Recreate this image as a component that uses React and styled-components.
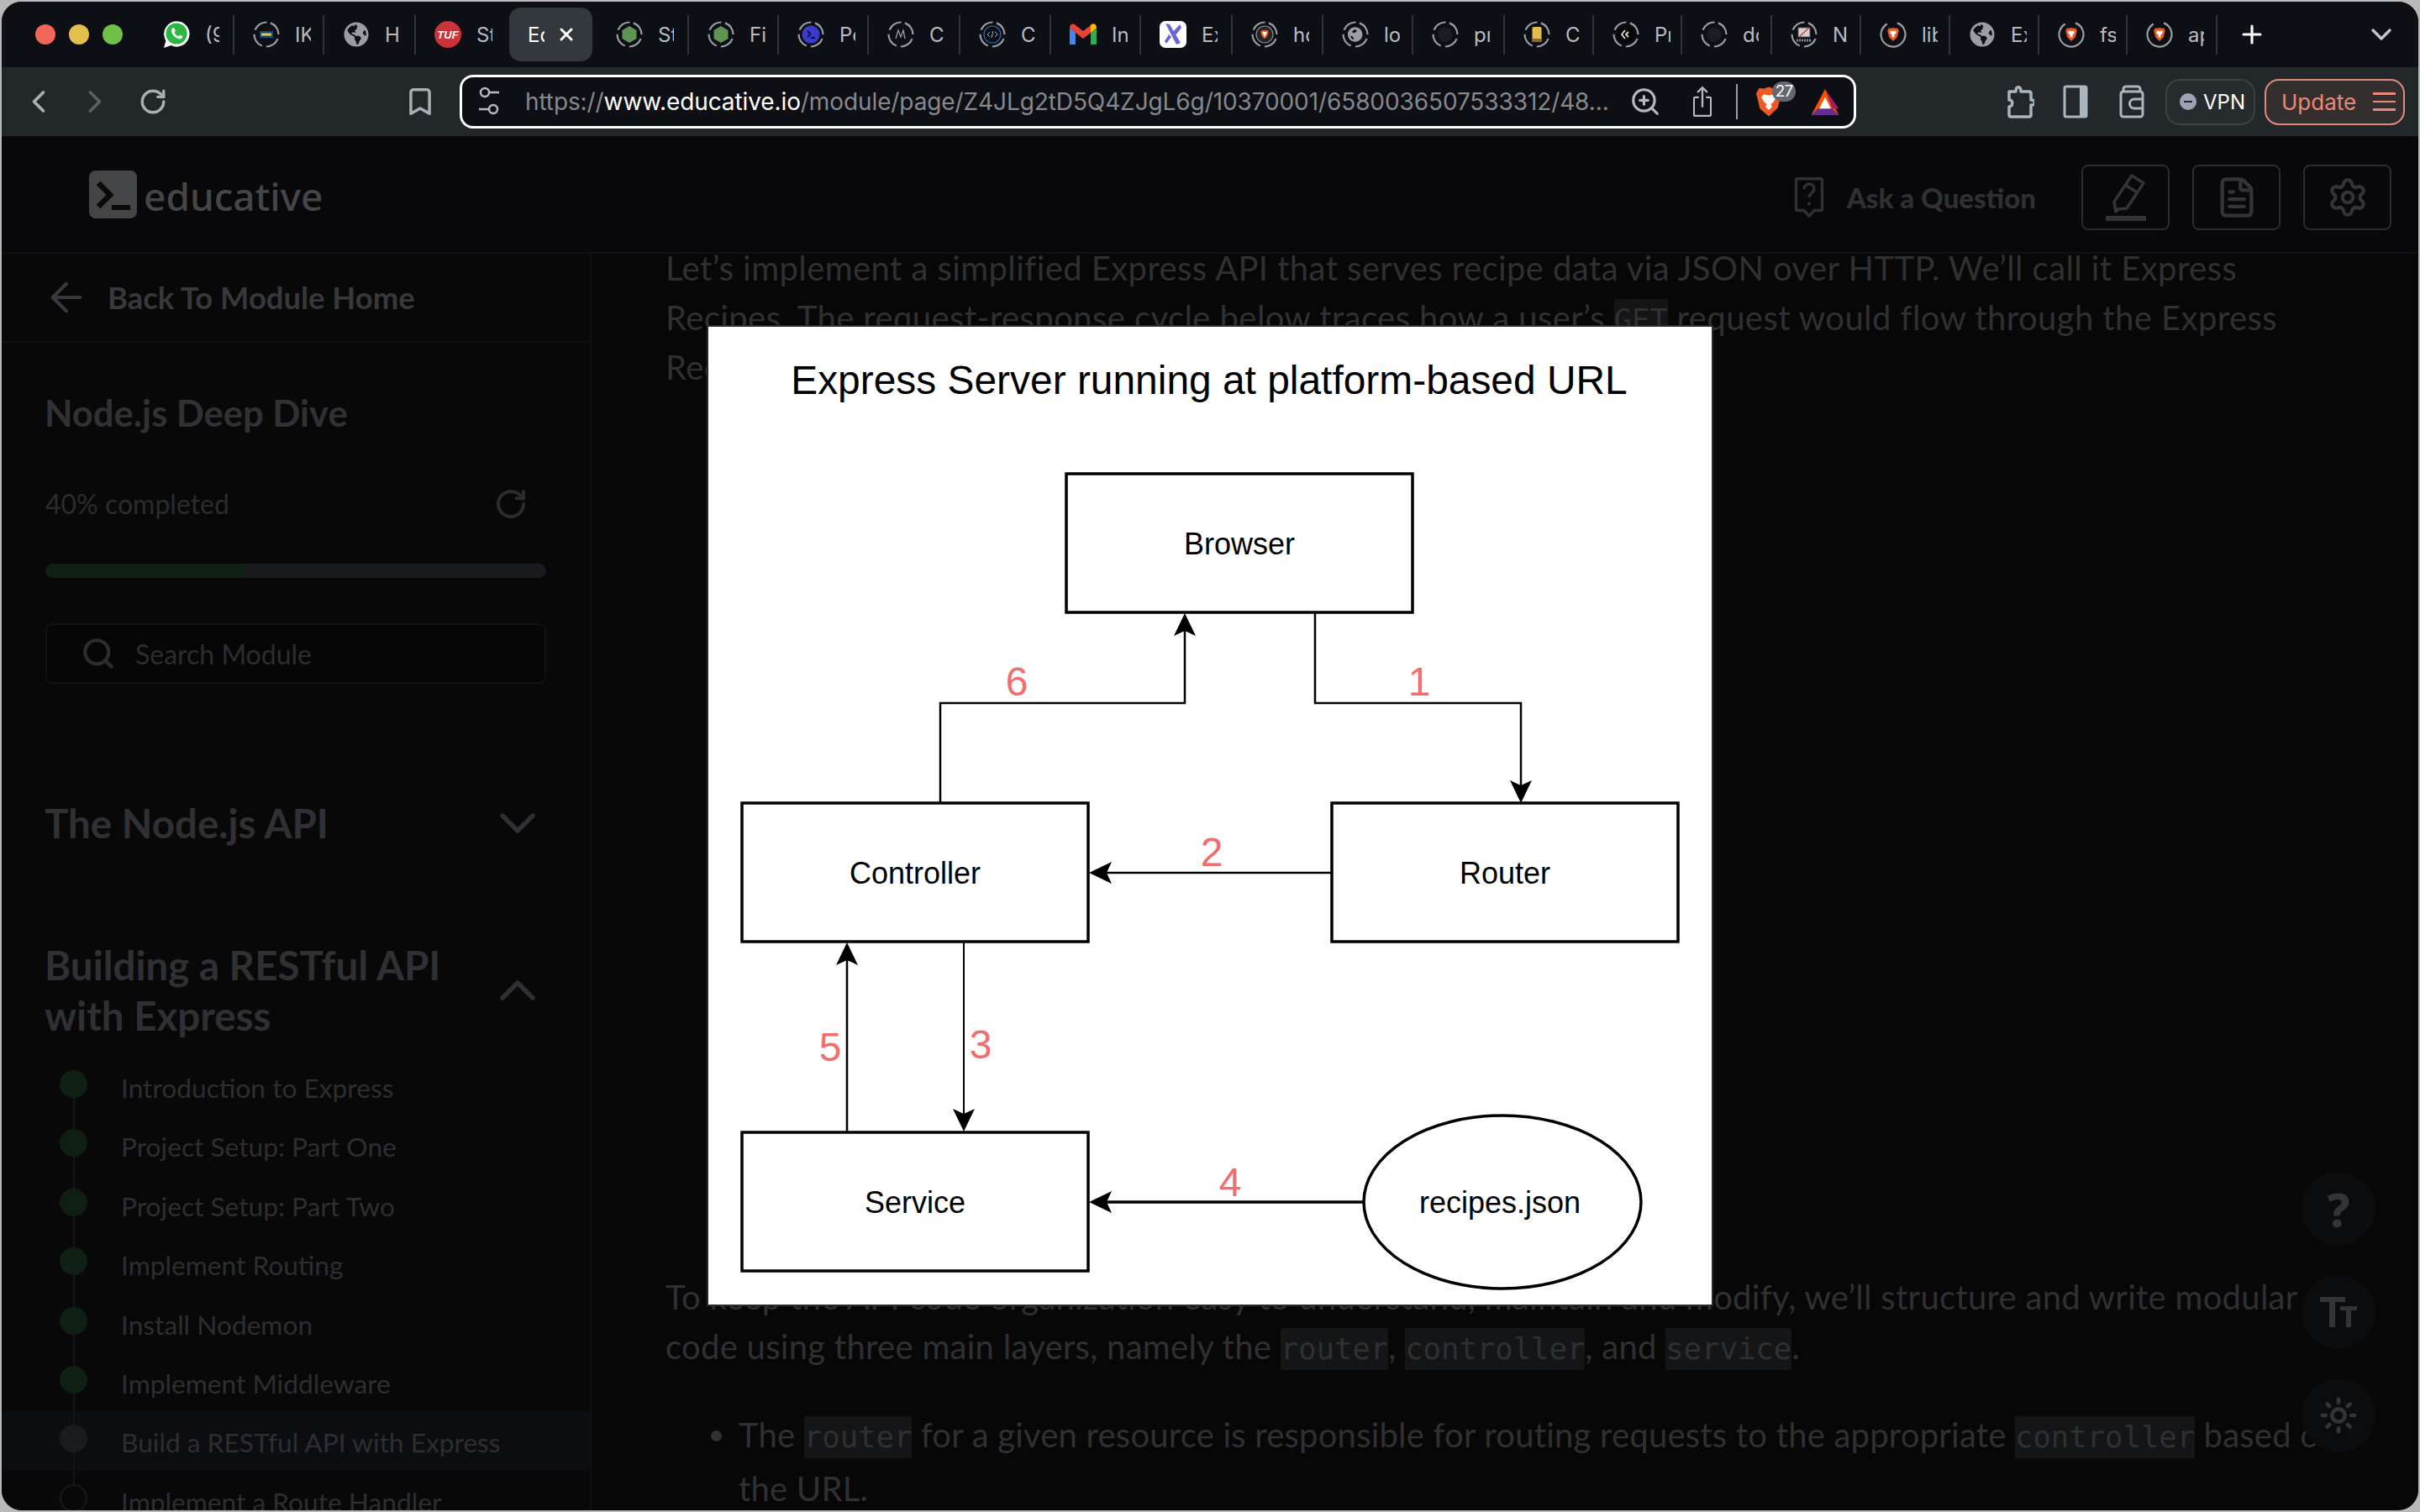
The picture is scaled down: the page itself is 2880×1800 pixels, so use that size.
import React from "react";
import styled, { createGlobalStyle } from "styled-components";
import {
  ArrowLeft,
  Bookmark,
  ChevronDown,
  ChevronLeft,
  ChevronRight,
  ChevronUp,
  FileText,
  Plus,
  RotateCw,
  Search,
  Settings,
  Sun,
  X,
  ZoomIn,
} from "lucide-react";
import { FaGlobeAmericas } from "react-icons/fa";

const GlobalStyle = createGlobalStyle`
  html, body {
    margin: 0;
    padding: 0;
    background: #b9b9b9;
  }
  body {
    width: 2880px;
    height: 1800px;
    overflow: hidden;
    font-family: "Lato", "Noto Sans", sans-serif;
  }
`;

const Window = styled.div`
  position: relative;
  margin: 2px;
  width: 2876px;
  height: 1796px;
  border-radius: 24px;
  overflow: hidden;
  display: flex;
  flex-direction: column;
  background: #070708;
`;

/* ---------- browser chrome ---------- */

const TabBar = styled.div`
  height: 78px;
  flex: none;
  background: #0e0f14;
  display: flex;
  align-items: center;
  padding-left: 32px;
`;

const Lights = styled.div`
  width: 138px;
  flex: none;
  display: flex;
  gap: 16px;
  padding-left: 8px;
  box-sizing: border-box;
`;

const Light = styled.span`
  width: 24px;
  height: 24px;
  border-radius: 50%;
  background: ${(p) => p.$color};
`;

const Tab = styled.div`
  flex: none;
  box-sizing: border-box;
  width: ${(p) => p.$w}px;
  height: 47px;
  padding-left: 22px;
  display: flex;
  align-items: center;
  gap: 18px;
  border-right: 2px solid ${(p) => (p.$plain ? "transparent" : "#303338")};
`;

const ActiveTabWrap = styled.div`
  flex: none;
  width: ${(p) => p.$w}px;
  padding-left: 4px;
  box-sizing: border-box;
`;

const ActiveTab = styled.div`
  width: 99px;
  height: 64px;
  border-radius: 14px;
  background: #32383b;
  display: flex;
  align-items: center;
  padding-left: 22px;
  box-sizing: border-box;
  color: #fff;
  gap: 14px;
`;

const TabLabel = styled.span`
  width: ${(p) => p.$width || 19}px;
  overflow: hidden;
  white-space: nowrap;
  font: 24px "Inter", "Liberation Sans", sans-serif;
  color: ${(p) => (p.$active ? "#fff" : "#b9bbbf")};
`;

const NewTab = styled.div`
  flex: none;
  width: 82px;
  display: flex;
  justify-content: center;
  color: #fff;
`;

const TabMenu = styled.div`
  flex: none;
  margin-left: 93px;
  color: #c4c6c9;
  display: flex;
`;

const Toolbar = styled.div`
  height: 82px;
  flex: none;
  background: #22272a;
  display: flex;
  align-items: center;
  padding-left: 20px;
`;

const ToolIcon = styled.div`
  flex: none;
  width: 48px;
  height: 48px;
  margin-left: ${(p) => p.$ml || 0}px;
  display: flex;
  align-items: center;
  justify-content: center;
  color: ${(p) => p.$color || "#a9b0b5"};
`;

const AddressBar = styled.div`
  flex: none;
  box-sizing: border-box;
  width: 1662px;
  height: 64px;
  margin-left: 23px;
  border: 3px solid #fff;
  border-radius: 16px;
  background: #0e0f14;
  display: flex;
  align-items: center;
  padding-left: 20px;
`;

const Url = styled.div`
  width: 1291px;
  margin-left: 31px;
  flex: none;
  white-space: nowrap;
  overflow: hidden;
  font: 28px "Inter", "Liberation Sans", sans-serif;
  letter-spacing: -0.1px;
  color: #85888c;
  b {
    font-weight: 400;
    color: #fff;
  }
`;

const UrlIcon = styled.div`
  flex: none;
  width: 40px;
  height: 48px;
  margin-left: ${(p) => p.$ml || 0}px;
  display: flex;
  align-items: center;
  justify-content: center;
  color: #b6babd;
`;

const UrlDivider = styled.div`
  flex: none;
  width: 2px;
  height: 42px;
  margin-left: 20px;
  background: #9a9ea2;
`;

const ShieldWrap = styled.div`
  position: relative;
  flex: none;
  width: 40px;
  height: 48px;
  margin-left: 17px;
  display: flex;
  align-items: center;
  justify-content: center;
`;

const ShieldBadge = styled.span`
  position: absolute;
  top: 0;
  left: 24px;
  width: 28px;
  height: 24px;
  border-radius: 12px;
  background: #65676f;
  color: #fff;
  font: 19px "Inter", "Liberation Sans", sans-serif;
  letter-spacing: -1px;
  text-align: center;
  line-height: 24px;
`;

const Pill = styled.div`
  flex: none;
  box-sizing: border-box;
  height: 55px;
  border-radius: 17px;
  display: flex;
  align-items: center;
  font-family: "Inter", "Liberation Sans", sans-serif;
`;

const VpnPill = styled(Pill)`
  width: 107px;
  margin-left: 16px;
  padding-left: 15px;
  gap: 8px;
  border: 2px solid #3b4145;
  background: #262b2e;
  color: #fff;
  font-size: 24px;
`;

const VpnDot = styled.span`
  width: 20px;
  height: 20px;
  border-radius: 50%;
  background: #9ea2b2;
  display: flex;
  align-items: center;
  justify-content: center;
  &::before {
    content: "";
    width: 10px;
    height: 2px;
    background: #22272a;
  }
`;

const UpdatePill = styled(Pill)`
  width: 167px;
  margin-left: 11px;
  padding-left: 18px;
  gap: 20px;
  border: 2px solid #e08a7e;
  background: #342f2f;
  color: #e8897c;
  font-size: 26px;
`;

const MenuBars = styled.span`
  width: 27px;
  display: flex;
  flex-direction: column;
  gap: 7px;
  i {
    display: block;
    height: 2.5px;
    background: #e8897c;
  }
`;

/* ---------- site header ---------- */

const SiteHeader = styled.div`
  height: 140px;
  flex: none;
  box-sizing: border-box;
  border-bottom: 2px solid #0f1012;
  display: flex;
  align-items: center;
  padding: 0 32px 0 104px;
  background: #08080a;
`;

const Logo = styled.div`
  display: flex;
  align-items: center;
  gap: 8px;
  font: 500 46px "Noto Sans", sans-serif;
  color: #444547;
  span {
    margin-top: 3px;
  }
`;

const AskQuestion = styled.div`
  margin: 8px 0 0 auto;
  display: flex;
  align-items: center;
  gap: 26px;
  font: 900 33px "Lato", sans-serif;
  color: #2f3033;
`;

const HeaderButton = styled.div`
  width: 105px;
  height: 78px;
  box-sizing: border-box;
  margin: 8px 0 0 ${(p) => p.$ml || 27}px;
  border: 2px solid #2a2b2d;
  border-radius: 8px;
  display: flex;
  align-items: center;
  justify-content: center;
  color: #333436;
`;

/* ---------- sidebar ---------- */

const Body = styled.div`
  flex: 1;
  min-height: 0;
  display: flex;
`;

const Sidebar = styled.div`
  flex: none;
  width: 702px;
  box-sizing: border-box;
  border-right: 2px solid #0f1012;
  background: #080809;
  overflow: hidden;
`;

const BackRow = styled.div`
  height: 106px;
  box-sizing: border-box;
  border-bottom: 2px solid #0f1012;
  padding-left: 49px;
  display: flex;
  align-items: center;
  gap: 21px;
  font: 700 36.4px "Lato", sans-serif;
  color: #37383b;
`;

const SideSection = styled.div`
  padding: 0 52px;
`;

const CourseTitle = styled.div`
  margin-top: 53px;
  margin-left: -1px;
  font: 700 43.5px/60px "Lato", sans-serif;
  color: #303134;
`;

const ProgressRow = styled.div`
  margin-top: 59px;
  display: flex;
  justify-content: space-between;
  align-items: center;
  padding-right: 22px;
  font: 32px/40px "Lato", sans-serif;
  color: #2b2c2e;
`;

const ProgressTrack = styled.div`
  margin-top: 51px;
  height: 17px;
  border-radius: 9px;
  background: #191a1d;
  overflow: hidden;
`;

const ProgressFill = styled.div`
  height: 100%;
  background: #101f13;
`;

const SearchBox = styled.div`
  margin-top: 54px;
  height: 72px;
  box-sizing: border-box;
  border: 2px solid #101113;
  border-radius: 8px;
  background: #060607;
  padding-left: 40px;
  display: flex;
  align-items: center;
  gap: 23px;
  font: 32px "Lato", sans-serif;
  color: #2c2d2f;
`;

const Chapter = styled.div`
  margin-top: ${(p) => p.$mt}px;
  margin-left: -1px;
  display: flex;
  justify-content: space-between;
  align-items: center;
  font: 700 47.500px/60px "Lato", sans-serif;
  color: #2f3033;
  svg {
    flex: none;
    margin: -6px -2px -6px 0;
  }
`;

const Lessons = styled.div`
  margin-top: 19px;
`;

const Lesson = styled.div`
  height: 70.4px;
  padding-left: 69px;
  display: flex;
  gap: 40px;
  background: ${(p) => (p.$current ? "#0c0d10" : "transparent")};
`;

const Marker = styled.div`
  width: 33px;
  flex: none;
  display: flex;
  flex-direction: column;
  align-items: center;
`;

const Segment = styled.span`
  width: 2px;
  flex: ${(p) => (p.$grow ? 1 : "none")};
  height: ${(p) => (p.$grow ? "auto" : "16px")};
  background: ${(p) => (p.$hidden ? "transparent" : "#141517")};
`;

const Dot = styled.span`
  flex: none;
  width: 33px;
  height: 33px;
  box-sizing: border-box;
  border-radius: 50%;
  background: ${(p) => (p.$state === "done" ? "#101f13" : p.$state === "now" ? "#1a1b1d" : "transparent")};
  border: ${(p) => (p.$state === "todo" ? "2px solid #17181b" : "none")};
`;

const LessonName = styled.div`
  font: 31.7px/70.4px "Lato", sans-serif;
  padding-top: 2px;
  white-space: nowrap;
  color: #2d2e30;
`;

/* ---------- article ---------- */

const Main = styled.div`
  flex: 1;
  min-width: 0;
  overflow: hidden;
  padding-left: 88px;
`;

const Article = styled.div`
  margin-top: -12px;
  font: 40px/59px "Lato", sans-serif;
  color: #2f3032;
  white-space: nowrap;
`;

const Paragraph = styled.p`
  margin: 0;
  letter-spacing: ${(p) => p.$spacing}px;
`;

const FigureSlot = styled.div`
  height: 1048px;
`;

const Code = styled.code`
  display: inline-block;
  height: 50px;
  vertical-align: baseline;
  font: 35.6px/50px "DejaVu Sans Mono", monospace;
  letter-spacing: 0;
  background: #141517;
  color: #2f3032;
`;

const List = styled.ul`
  margin: 43px 0 0;
  padding-left: 87px;
  line-height: 64px;
  letter-spacing: 0.21px;
  li::marker {
    color: #2f3032;
  }
`;

/* ---------- floating ---------- */

const FloatDock = styled.div`
  position: absolute;
  right: 51px;
  top: 1393px;
  display: flex;
  flex-direction: column;
  gap: 35px;
`;

const FloatButton = styled.div`
  width: 88px;
  height: 88px;
  border-radius: 50%;
  background: #0b0c0e;
  display: flex;
  align-items: center;
  justify-content: center;
  color: #333437;
  font: 800 56px "Noto Sans", sans-serif;
`;

const Modal = styled.div`
  position: absolute;
  left: 839px;
  top: 385px;
  width: 1198px;
  height: 1168px;
  box-sizing: border-box;
  border: 2px solid #2b2b2b;
  background: #fff;
`;

const DiagramSvg = styled.svg`
  display: block;
  width: 1194px;
  height: 1164px;
  font-family: "Liberation Sans", Arial, sans-serif;
`;

/* ---------- small drawings ---------- */

const Ring = ({ children, solid }) => (
  <svg width="32" height="32" viewBox="0 0 32 32" style={{ flex: "none" }}>
    <circle
      cx="16"
      cy="16"
      r="14.5"
      fill="none"
      stroke="#9a9da1"
      strokeWidth="2.2"
      strokeDasharray={solid ? "78 13" : "17.5 5.3"}
      transform="rotate(-70 16 16)"
    />
    {children}
  </svg>
);

const BraveShield = ({ size = 16, x = 8, y = 8 }) => (
  <svg x={x} y={y} width={size} height={size} viewBox="0 0 24 28">
    <path d="M12 0l5 1.5 4-.5 3 5-1 4-3 10-8 8-8-8L1 10 0 6l3-5 4 .5z" fill="#ee5a24" />
    <path d="M12 7l5-1 2 3-3 5-2 1 1 3-3 3-3-3 1-3-2-1-3-5 2-3z" fill="#fff" />
  </svg>
);

const Favicon = ({ kind }) => {
  switch (kind) {
    case "whatsapp":
      return (
        <svg width="32" height="34" viewBox="0 0 32 34" style={{ flex: "none" }}>
          <path d="M1 33l2.4-8.6A15.2 15.2 0 1 1 9.5 30z" fill="#fff" />
          <circle cx="16" cy="16" r="12.6" fill="#2bb741" />
          <path
            d="M11.5 9.5c-1.6 1-2 3-1 5.500 1.300 3 4 5.800 7 7 2.500 1 4.500.4 5.300-1.300.4-.9.4-1.500.2-1.700l-3-1.500-1.600 1.800c-2.400-.9-4-2.500-5-5l1.500-1.600-1.300-3c-.5-.7-1.500-.8-2.100-.2z"
            fill="#fff"
          />
        </svg>
      );
    case "ikea":
      return (
        <Ring>
          <rect x="8" y="12" width="16" height="8" fill="#0a4a92" />
          <rect x="10" y="14.500" width="12" height="3" fill="#f3c623" />
        </Ring>
      );
    case "globe":
      return <FaGlobeAmericas size={30} color="#9a9ea3" style={{ flex: "none", margin: "0 1px" }} />;
    case "tuf":
      return (
        <svg width="32" height="32" viewBox="0 0 32 32" style={{ flex: "none" }}>
          <circle cx="16" cy="16" r="16" fill="#c8343a" />
          <text x="16" y="20.500" textAnchor="middle" fontSize="13" fontWeight="800" fontStyle="italic" fill="#fff" fontFamily="Liberation Sans">
            TUF
          </text>
        </svg>
      );
    case "node":
      return (
        <Ring>
          <path d="M16 6l8.500 5v10L16 26l-8.500-5V11z" fill="#5f9455" />
        </Ring>
      );
    case "prompt":
      return (
        <Ring>
          <circle cx="16" cy="16" r="10.500" fill="#3a3ccf" />
          <path d="M12 12l3.500 3.500L12 19M16 20h5" stroke="#101030" strokeWidth="1.800" fill="none" />
        </Ring>
      );
    case "medium":
      return (
        <Ring>
          <path d="M10 21l3-10 3 8 3-8 2 10" stroke="#9a9da1" strokeWidth="1.300" fill="none" />
        </Ring>
      );
    case "code":
      return (
        <Ring>
          <circle cx="16" cy="16" r="10" fill="#0a0c14" stroke="#2e6fb5" strokeWidth="1.200" />
          <path d="M13 13l-3 3 3 3M19 13l3 3-3 3M17 12l-2 8" stroke="#9fb4c9" strokeWidth="1" fill="none" />
        </Ring>
      );
    case "gmail":
      return (
        <svg width="32" height="32" viewBox="0 0 32 32" style={{ flex: "none" }}>
          <path d="M0 8v20h7V14z" fill="#4285f4" />
          <path d="M25 14v14h7V8z" fill="#34a853" />
          <path d="M0 8c0-4 4-6 7-3l9 7 9-7c3-3 7-1 7 3l-7 6-9 7-9-7z" fill="#ea4335" />
          <path d="M25 5c3-3 7-1 7 3l-7 6z" fill="#fbbc04" />
        </svg>
      );
    case "excal":
      return (
        <svg width="32" height="32" viewBox="0 0 32 32" style={{ flex: "none" }}>
          <rect width="32" height="32" rx="7" fill="#fff" />
          <path d="M7 3l5 1 13 22-5 2zM24 4l2 4-7 9-4-3zM6 24l5-8 3 3-6 8z" fill="#6965db" />
        </svg>
      );
    case "brave-ring":
      return (
        <Ring>
          <circle cx="16" cy="16" r="10" fill="#24262a" stroke="#8d8f93" strokeWidth="1.200" />
          <BraveShield size={11} x={10.500} y={10.500} />
        </Ring>
      );
    case "globe-ring":
      return (
        <Ring>
          <svg x="7" y="7" width="18" height="18" viewBox="0 0 512 512">
            <path d="M248 8C111 8 0 119 0 256s111 248 248 248 248-111 248-248S385 8 248 8zm0 80l60 30-40 70-90 20-40-60zM90 300l80 30 40 80-30 20c-50-20-80-70-90-130z" fill="#9a9ea3" />
          </svg>
        </Ring>
      );
    case "github":
      return (
        <Ring>
          <svg x="7" y="7" width="18" height="18" viewBox="0 0 496 512">
            <circle cx="248" cy="256" r="248" fill="#1b1d22" />
          </svg>
        </Ring>
      );
    case "book":
      return (
        <Ring>
          <rect x="10.500" y="7" width="11" height="18" rx="1.500" fill="#e2bd4a" />
          <rect x="10.500" y="21" width="11" height="4" fill="#8a6a2a" />
        </Ring>
      );
    case "leet":
      return (
        <Ring>
          <circle cx="16" cy="16" r="10.500" fill="#050505" />
          <path d="M15 11l-4 5 4 5M19 13l-3 3 3 3" stroke="#ddd" strokeWidth="1.800" fill="none" />
        </Ring>
      );
    case "laptop":
      return (
        <Ring>
          <rect x="9" y="8" width="14" height="11" fill="#d8d0d0" stroke="#555" />
          <path d="M10 19l12-11" stroke="#c04040" strokeWidth="1.300" />
          <path d="M7 23h18" stroke="#7a8fa8" strokeWidth="3" strokeDasharray="2 1" />
        </Ring>
      );
    case "brave":
      return (
        <Ring solid>
          <BraveShield />
        </Ring>
      );
    default:
      return null;
  }
};

const ShieldIcon = () => (
  <svg width="30" height="38" viewBox="0 0 24 30" style={{ display: "block" }}>
    <path d="M12 1l5 1.500 4-.5 3 5-1 4-2.500 10L12 29l-8.500-7.500L1 11 0 7l3-5 4 .5z" fill="#ee5a24" />
    <path d="M12 9l5-1 2 3-3 5-2 1 1 3-3 3-3-3 1-3-2-1-3-5 2-3z" fill="#fff" />
  </svg>
);

const Extension = () => (
  <svg width="34" height="44" viewBox="0 0 34 44" fill="none" stroke="#a9b6bd" strokeWidth="3.500">
    <path d="M4 10h8c0-7 6-7 6 0h10a2 2 0 0 1 2 2v8c6-1 6 7 0 6v12a2 2 0 0 1-2 2H6a2 2 0 0 1-2-2V28c5 0 5-9 0-8z" strokeLinejoin="round" />
  </svg>
);

const SidePanel = () => (
  <svg width="30" height="40" viewBox="0 0 30 40">
    <rect x="2" y="2" width="26" height="36" rx="2" fill="none" stroke="#a9b6bd" strokeWidth="3" />
    <rect x="20" y="2" width="8" height="36" fill="#a9b6bd" />
  </svg>
);

const WalletIcon = () => (
  <svg width="30" height="40" viewBox="0 0 30 40" fill="none" stroke="#a9b6bd" strokeWidth="3">
    <path d="M5 8V5a3 3 0 0 1 3-3h14a3 3 0 0 1 3 3v3" />
    <rect x="2" y="8" width="26" height="30" rx="3" />
    <path d="M28 17H18a5 5 0 0 0 0 11h10" />
  </svg>
);

const SlidersIcon = () => (
  <svg width="24" height="42" viewBox="0 0 24 42" fill="none" stroke="#b6babd" strokeWidth="2.500">
    <circle cx="7" cy="10" r="5" />
    <path d="M12 10h12M0 30h12" />
    <circle cx="17" cy="30" r="5" />
  </svg>
);

const ShareIcon = () => (
  <svg width="22" height="38" viewBox="0 0 26 44" fill="none" stroke="#b6babd" strokeWidth="2.800">
    <path d="M8 16H3a2 2 0 0 0-2 2v22a2 2 0 0 0 2 2h20a2 2 0 0 0 2-2V18a2 2 0 0 0-2-2h-5M13 30V2M6 9l7-7 7 7" />
  </svg>
);

const BatIcon = () => (
  <svg width="36" height="31" viewBox="0 0 38 36">
    <path d="M19 0l19 36H0z" fill="#ff5000" />
    <path d="M0 36l9-9h20l9 9z" fill="#662d91" />
    <path d="M19 0l10 27h9z" fill="#9e1f63" />
    <path d="M19 11l8 16H11z" fill="#fff" />
  </svg>
);

const LogoMark = () => (
  <svg width="57" height="57" viewBox="0 0 57 57">
    <rect width="57" height="57" rx="8" fill="#444547" />
    <path d="M11 15l14 14-14 14" stroke="#0a0a0b" strokeWidth="6.500" fill="none" />
    <rect x="27" y="41" width="22" height="6" fill="#0a0a0b" />
  </svg>
);

const AskIcon = () => (
  <svg width="38" height="48" viewBox="0 4 40 56" fill="none" stroke="#2f3033" strokeWidth="4">
    <path d="M4 6h32a2 2 0 0 1 2 2v40a2 2 0 0 1-2 2h-9l-7 8-7-8H4a2 2 0 0 1-2-2V8a2 2 0 0 1 2-2z" />
    <path d="M13 21c0-10 14-10 14-1 0 6-7 6-7 12" />
    <circle cx="20" cy="41" r="2.500" fill="#2f3033" stroke="none" />
  </svg>
);

const HighlighterIcon = () => (
  <svg width="50" height="56" viewBox="0 0 50 56" fill="none" stroke="#333436" strokeWidth="3.500">
    <path d="M32 2l14 9-20 30-10 1-3 3 -2-12z" strokeLinejoin="round" />
    <path d="M24 13l14 9" />
    <rect x="1" y="50" width="48" height="6" fill="#333436" stroke="none" />
  </svg>
);

const TextSizeIcon = () => (
  <svg width="44" height="36" viewBox="0 0 44 36" fill="#333437">
    <path d="M0 0h30v6H18v30h-7V6H0z" />
    <path d="M24 11h20v5h-7v20h-6V16h-7z" />
  </svg>
);

const Arrow = ({ x, y, angle }) => (
  <path d="M0 0L13 27L0 21L-13 27Z" fill="#000" transform={`translate(${x} ${y}) rotate(${angle})`} />
);

const Box = ({ x, y, label }) => (
  <g>
    <rect x={x} y={y} width="412" height="165" fill="#fff" stroke="#000" strokeWidth="3.500" />
    <text x={x + 206} y={y + 83} textAnchor="middle" dominantBaseline="central" fontSize="36" fill="#000">
      {label}
    </text>
  </g>
);

const StepLabel = ({ x, y, n }) => (
  <text x={x} y={y} textAnchor="middle" dominantBaseline="central" fontSize="48" fill="#f26d6d">
    {n}
  </text>
);

const Diagram = () => (
  <DiagramSvg viewBox="843 389 1194 1164">
    <text x="1439" y="452" textAnchor="middle" dominantBaseline="central" fontSize="47.900" fill="#000">
      Express Server running at platform-based URL
    </text>

    <g fill="none" stroke="#000" strokeWidth="2.500">
      <path d="M1119 956V837H1410V745" />
      <path d="M1565 729V837H1810V940" />
      <path d="M1585 1039H1310" />
      <path d="M1008 1348V1135" />
      <path d="M1147 1121V1335" strokeWidth="2" />
      <path d="M1623 1431H1310" strokeWidth="3.500" />
    </g>
    <Arrow x={1410} y={730} angle={0} />
    <Arrow x={1810} y={956} angle={180} />
    <Arrow x={1296} y={1039} angle={-90} />
    <Arrow x={1008} y={1122} angle={0} />
    <Arrow x={1147} y={1347} angle={180} />
    <Arrow x={1296} y={1431} angle={-90} />

    <Box x={1269} y={564} label="Browser" />
    <Box x={883} y={956} label="Controller" />
    <Box x={1585} y={956} label="Router" />
    <Box x={883} y={1348} label="Service" />
    <ellipse cx="1788" cy="1431" rx="165" ry="103" fill="#fff" stroke="#000" strokeWidth="3.500" />
    <text x="1785" y="1431" textAnchor="middle" dominantBaseline="central" fontSize="36" fill="#000">
      recipes.json
    </text>

    <StepLabel x={1210} y={811} n="6" />
    <StepLabel x={1689} y={811} n="1" />
    <StepLabel x={1442} y={1014} n="2" />
    <StepLabel x={988} y={1246} n="5" />
    <StepLabel x={1167} y={1243} n="3" />
    <StepLabel x={1464} y={1407} n="4" />
  </DiagramSvg>
);

/* ---------- data ---------- */

const tabs = [
  { w: 107, icon: "whatsapp", label: "(9", width: 17 },
  { w: 107, icon: "ikea", label: "IK" },
  { w: 109, icon: "globe", label: "Hi" },
  { w: 107, icon: "tuf", label: "St", plain: true },
  { w: 109, active: true, label: "Ed" },
  { w: 109, icon: "node", label: "St" },
  { w: 107, icon: "node", label: "Fi" },
  { w: 107, icon: "prompt", label: "Pe" },
  { w: 109, icon: "medium", label: "Cr" },
  { w: 108, icon: "code", label: "Cr" },
  { w: 107, icon: "gmail", label: "In" },
  { w: 109, icon: "excal", label: "Ex" },
  { w: 108, icon: "brave-ring", label: "ho" },
  { w: 107, icon: "globe-ring", label: "lo" },
  { w: 109, icon: "github", label: "pr" },
  { w: 106, icon: "book", label: "C" },
  { w: 105, icon: "leet", label: "Pr" },
  { w: 107, icon: "github", label: "do" },
  { w: 106, icon: "laptop", label: "N" },
  { w: 106, icon: "brave", label: "lib" },
  { w: 106, icon: "globe", label: "Ex" },
  { w: 105, icon: "brave", label: "fs" },
  { w: 107, icon: "brave", label: "ap" },
];

const lessons = [
  { name: "Introduction to Express", state: "done" },
  { name: "Project Setup: Part One", state: "done" },
  { name: "Project Setup: Part Two", state: "done" },
  { name: "Implement Routing", state: "done" },
  { name: "Install Nodemon", state: "done" },
  { name: "Implement Middleware", state: "done" },
  { name: "Build a RESTful API with Express", state: "now" },
  { name: "Implement a Route Handler", state: "todo" },
];

const App = () => (
  <>
    <GlobalStyle />
    <Window>
      <TabBar>
        <Lights>
          <Light $color="#f2665a" />
          <Light $color="#e3bf4c" />
          <Light $color="#70bf47" />
        </Lights>
        {tabs.map((t, i) =>
          t.active ? (
            <ActiveTabWrap key={i} $w={t.w}>
              <ActiveTab>
                <TabLabel $active $width={20}>{t.label}</TabLabel>
                <X size={24} strokeWidth={3} />
              </ActiveTab>
            </ActiveTabWrap>
          ) : (
            <Tab key={i} $w={t.w} $plain={t.plain}>
              <Favicon kind={t.icon} />
              <TabLabel $width={t.width}>{t.label}</TabLabel>
            </Tab>
          )
        )}
        <NewTab>
          <Plus size={34} strokeWidth={2.2} />
        </NewTab>
        <TabMenu>
          <ChevronDown size={40} strokeWidth={2} />
        </TabMenu>
      </TabBar>

      <Toolbar>
        <ToolIcon>
          <ChevronLeft size={44} strokeWidth={2} />
        </ToolIcon>
        <ToolIcon $ml={19} $color="#5b6063">
          <ChevronRight size={44} strokeWidth={2} />
        </ToolIcon>
        <ToolIcon $ml={21}>
          <RotateCw size={34} strokeWidth={2.4} />
        </ToolIcon>
        <ToolIcon $ml={270}>
          <Bookmark size={38} strokeWidth={2.2} />
        </ToolIcon>
        <AddressBar>
          <SlidersIcon />
          <Url>
            https://<b>www.educative.io</b>/module/page/Z4JLg2tD5Q4ZJgL6g/10370001/6580036507533312/48...
          </Url>
          <UrlIcon $ml={22}>
            <ZoomIn size={38} strokeWidth={2} />
          </UrlIcon>
          <UrlIcon $ml={28}>
            <ShareIcon />
          </UrlIcon>
          <UrlDivider />
          <ShieldWrap>
            <ShieldIcon />
            <ShieldBadge>27</ShieldBadge>
          </ShieldWrap>
          <UrlIcon $ml={27}>
            <BatIcon />
          </UrlIcon>
        </AddressBar>
        <ToolIcon $ml={171}>
          <Extension />
        </ToolIcon>
        <ToolIcon $ml={18}>
          <SidePanel />
        </ToolIcon>
        <ToolIcon $ml={19}>
          <WalletIcon />
        </ToolIcon>
        <VpnPill>
          <VpnDot />
          VPN
        </VpnPill>
        <UpdatePill>
          Update
          <MenuBars>
            <i />
            <i />
            <i />
          </MenuBars>
        </UpdatePill>
      </Toolbar>

      <SiteHeader>
        <Logo>
          <LogoMark />
          <span>educative</span>
        </Logo>
        <AskQuestion>
          <AskIcon />
          Ask a Question
        </AskQuestion>
        <HeaderButton $ml={54}>
          <HighlighterIcon />
        </HeaderButton>
        <HeaderButton>
          <FileText size={52} strokeWidth={2} />
        </HeaderButton>
        <HeaderButton>
          <Settings size={50} strokeWidth={2} />
        </HeaderButton>
      </SiteHeader>

      <Body>
        <Sidebar>
          <BackRow>
            <ArrowLeft size={56} strokeWidth={1.8} />
            Back To Module Home
          </BackRow>
          <SideSection>
            <CourseTitle>Node.js Deep Dive</CourseTitle>
            <ProgressRow>
              40% completed
              <RotateCw size={40} strokeWidth={2.4} />
            </ProgressRow>
            <ProgressTrack>
              <ProgressFill style={{ width: "40%" }} />
            </ProgressTrack>
            <SearchBox>
              <Search size={42} strokeWidth={2.4} />
              Search Module
            </SearchBox>
            <Chapter $mt={136}>
              The Node.js API
              <ChevronDown size={72} strokeWidth={1.8} />
            </Chapter>
            <Chapter $mt={109}>
              <span>
                Building a RESTful API
                <br />
                with Express
              </span>
              <ChevronUp size={72} strokeWidth={1.8} />
            </Chapter>
          </SideSection>
          <Lessons>
            {lessons.map((l, i) => (
              <Lesson key={l.name} $current={l.state === "now"}>
                <Marker>
                  <Segment $hidden={i === 0} />
                  <Dot $state={l.state} />
                  <Segment $grow />
                </Marker>
                <LessonName>{l.name}</LessonName>
              </Lesson>
            ))}
          </Lessons>
        </Sidebar>

        <Main>
          <Article>
            <Paragraph $spacing={0.42}>
              Let’s implement a simplified Express API that serves recipe data via JSON over HTTP. We’ll call it Express
              <br />
              Recipes. The request-response cycle below traces how a user’s <Code>GET</Code> request would flow through the Express
              <br />
              Recipes API.
            </Paragraph>
            <FigureSlot />
            <Paragraph $spacing={0.28}>
              To keep the API code organization easy to understand, maintain and modify, we’ll structure and write modular
              <br />
              code using three main layers, namely the <Code>router</Code>, <Code>controller</Code>, and <Code>service</Code>.
            </Paragraph>
            <List>
              <li>
                The <Code>router</Code> for a given resource is responsible for routing requests to the appropriate{" "}
                <Code>controller</Code> based on
                <br />
                the URL.
              </li>
            </List>
          </Article>
        </Main>
      </Body>

      <FloatDock>
        <FloatButton>?</FloatButton>
        <FloatButton>
          <TextSizeIcon />
        </FloatButton>
        <FloatButton>
          <Sun size={46} strokeWidth={2.4} />
        </FloatButton>
      </FloatDock>

      <Modal>
        <Diagram />
      </Modal>
    </Window>
  </>
);

export default App;
